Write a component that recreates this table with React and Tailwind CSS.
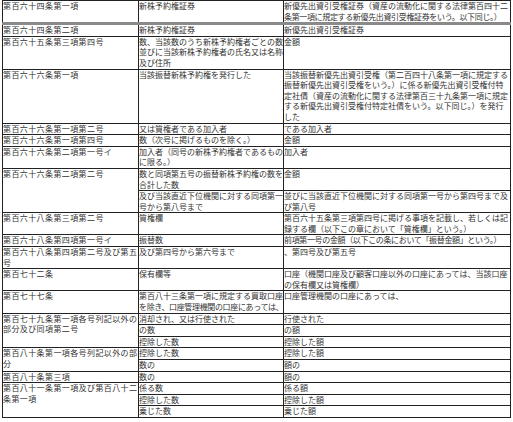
import React from "react";

const rows = [
  { l: ["第百六十四条第一項"], m: ["新株予約権証券"], r: ["新優先出資引受権証券（資産の流動化に関する法律第百四十二", "条第一項に規定する新優先出資引受権証券をいう。以下同じ。）"], head: true },
  { l: ["第百六十四条第二項"], m: ["新株予約権証券"], r: ["新優先出資引受権証券"] },
  { l: ["第百六十五条第三項第四号"], m: ["数、当該数のうち新株予約権者ごとの数", "並びに当該新株予約権者の氏名又は名称", "及び住所"], r: ["金額"] },
  { l: ["第百六十六条第一項"], m: ["当該振替新株予約権を発行した"], r: ["当該振替新優先出資引受権（第二百四十八条第一項に規定する", "振替新優先出資引受権をいう。）に係る新優先出資引受権付特", "定社債（資産の流動化に関する法律第百三十九条第一項に規定", "する新優先出資引受権付特定社債をいう。以下同じ。）を発行", "した"] },
  { l: ["第百六十六条第一項第二号"], m: ["又は質権者である加入者"], r: ["である加入者"] },
  { l: ["第百六十六条第一項第四号"], m: ["数（次号に掲げるものを除く。）"], r: ["金額"] },
  { l: ["第百六十六条第二項第一号イ"], m: ["加入者（同号の新株予約権者であるもの", "に限る。）"], r: ["加入者"] },
  { l: ["第百六十六条第二項第二号"], span: 2, m: ["数と同項第五号の振替新株予約権の数を", "合計した数"], r: ["金額"] },
  { m: ["及び当該直近下位機関に対する同項第一", "号から第八号まで"], r: ["並びに当該直近下位機関に対する同項第一号から第四号まで及", "び第八号"] },
  { l: ["第百六十八条第三項第二号"], m: ["質権欄"], r: ["第百六十五条第三項第四号に掲げる事項を記載し、若しくは記", "録する欄（以下この章において「質権欄」という。）"] },
  { l: ["第百六十八条第四項第一号イ"], m: ["振替数"], r: ["前項第一号の金額（以下この条において「振替金額」という。）"] },
  { l: ["第百六十八条第四項第二号及び第五", "号"], m: ["及び第四号から第六号まで"], r: ["、第四号及び第五号"] },
  { l: ["第百七十二条"], m: ["保有欄等"], r: ["口座（機関口座及び顧客口座以外の口座にあっては、当該口座", "の保有欄又は質権欄）"] },
  { l: ["第百七十七条"], m: ["第百八十三条第一項に規定する買取口座", "を除き、口座管理機関の口座にあっては、"], r: ["口座管理機関の口座にあっては、"] },
  { l: ["第百七十九条第一項各号列記以外の", "部分及び同項第二号"], span: 3, m: ["消却され、又は行使された"], r: ["行使された"] },
  { m: ["の数"], r: ["の額"] },
  { m: ["控除した数"], r: ["控除した額"] },
  { l: ["第百八十条第一項各号列記以外の部", "分"], span: 2, m: ["控除した数"], r: ["控除した額"] },
  { m: ["数の"], r: ["額の"] },
  { l: ["第百八十条第三項"], m: ["数の"], r: ["額の"] },
  { l: ["第百八十一条第一項及び第百八十二", "条第一項"], span: 3, m: ["係る数"], r: ["係る額"] },
  { m: ["控除した数"], r: ["控除した額"] },
  { m: ["乗じた数"], r: ["乗じた額"] },
];

function Lines({ lines, max, wide }) {
  return lines.map((t, i) => (
    <div
      key={i}
      className={`whitespace-nowrap overflow-hidden ${wide ? "tracking-[0.4px]" : ""} ${
        t.length > max ? "tracking-[-0.35px]" : ""
      }`}
    >
      {t}
    </div>
  ));
}

export default function App() {
  const cell = "border border-[#222] align-top p-0";
  return (
    <div className="bg-white w-[513px] h-[422px] pl-[2px] font-['Noto_Sans_CJK_JP',sans-serif] text-[8px] leading-[10.6px] text-[#333]">
      <table className="table-fixed border-collapse w-[508px]">
        <colgroup>
          <col className="w-[136px]" />
          <col className="w-[145px]" />
          <col className="w-[227px]" />
        </colgroup>
        <tbody>
          {rows.map((row, i) => {
            const hb = row.head ? "border-b-[3px] border-b-[#8a8a8a]" : "";
            return (
              <tr key={i}>
                {row.l && (
                  <td rowSpan={row.span || 1} className={`${cell} ${hb}`}>
                    <Lines lines={row.l} max={16} wide />
                  </td>
                )}
                <td className={`${cell} ${hb}`}>
                  <Lines lines={row.m} max={18} />
                </td>
                <td className={`${cell} ${hb}`}>
                  <Lines lines={row.r} max={28} />
                </td>
              </tr>
            );
          })}
        </tbody>
      </table>
    </div>
  );
}
